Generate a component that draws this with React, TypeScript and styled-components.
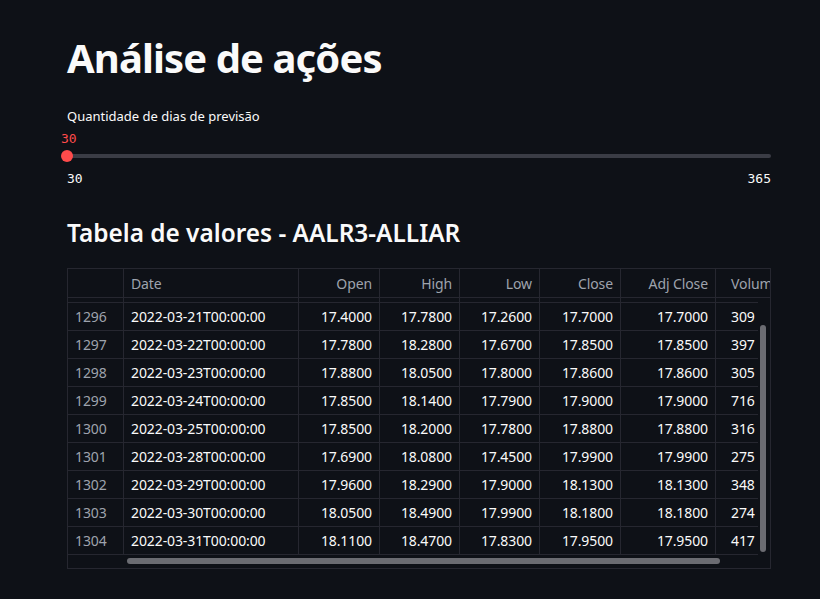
import React from 'react';
import styled, { createGlobalStyle } from 'styled-components';

const GlobalStyle = createGlobalStyle`
  html, body {
    margin: 0;
    padding: 0;
    background: #0e1117;
    color: #fafafa;
    font-family: "Noto Sans", "Open Sans", sans-serif;
  }
`;

type Row = [number, string, string, string, string, string, string, string];

const rows: Row[] = [
  [1296, '2022-03-21T00:00:00', '17.4000', '17.7800', '17.2600', '17.7000', '17.7000', '309'],
  [1297, '2022-03-22T00:00:00', '17.7800', '18.2800', '17.6700', '17.8500', '17.8500', '397'],
  [1298, '2022-03-23T00:00:00', '17.8800', '18.0500', '17.8000', '17.8600', '17.8600', '305'],
  [1299, '2022-03-24T00:00:00', '17.8500', '18.1400', '17.7900', '17.9000', '17.9000', '716'],
  [1300, '2022-03-25T00:00:00', '17.8500', '18.2000', '17.7800', '17.8800', '17.8800', '316'],
  [1301, '2022-03-28T00:00:00', '17.6900', '18.0800', '17.4500', '17.9900', '17.9900', '275'],
  [1302, '2022-03-29T00:00:00', '17.9600', '18.2900', '17.9000', '18.1300', '18.1300', '348'],
  [1303, '2022-03-30T00:00:00', '18.0500', '18.4900', '17.9900', '18.1800', '18.1800', '274'],
  [1304, '2022-03-31T00:00:00', '18.1100', '18.4700', '17.8300', '17.9500', '17.9500', '417'],
];

const headers = ['', 'Date', 'Open', 'High', 'Low', 'Close', 'Adj Close', 'Volume'];

export default function App() {
  return (
    <>
      <GlobalStyle />
      <Main>
        <Title>Análise de ações</Title>
        <SliderBlock>
          <Label>Quantidade de dias de previsão</Label>
          <ThumbValue>30</ThumbValue>
          <Track>
            <Thumb />
          </Track>
          <TickRow>
            <span>30</span>
            <span>365</span>
          </TickRow>
        </SliderBlock>
        <Subtitle>Tabela de valores - AALR3-ALLIAR</Subtitle>
        <Grid>
          <HeadRow>
            {headers.map((h, i) => (
              <Cell key={i} $col={i} $head>
                {h}
              </Cell>
            ))}
          </HeadRow>
          <Body>
            <SliverRow>
              {headers.map((_, i) => (
                <Cell key={i} $col={i} />
              ))}
            </SliverRow>
            {rows.map((r) => (
              <BodyRow key={r[0]}>
                {r.map((v, i) => (
                  <Cell key={i} $col={i}>
                    {v}
                  </Cell>
                ))}
              </BodyRow>
            ))}
          </Body>
          <HScroll />
          <VScroll />
        </Grid>
      </Main>
    </>
  );
}

const colWidths = [56, 175, 81, 80, 80, 81, 95, 72];

const Main = styled.main`
  padding: 26px 49px 30px 67px;
  width: 704px;
`;

const Title = styled.h1`
  margin: 0;
  font-size: 40px;
  font-weight: 700;
  line-height: 64px;
  letter-spacing: -0.9px;
  color: #fafafa;
`;

const SliderBlock = styled.div`
  margin-top: 16px;
`;

const Label = styled.div`
  font-size: 13px;
  line-height: 20px;
  color: #fafafa;
`;

const ThumbValue = styled.div`
  margin-top: 5px;
  font-family: "DejaVu Sans Mono", "Liberation Mono", monospace;
  font-size: 13px;
  line-height: 16px;
  color: #ff4b4b;
  width: 0;
  transform: translateX(-6px);
`;

const Track = styled.div`
  position: relative;
  margin-top: 7px;
  height: 4px;
  border-radius: 2px;
  background: #3a3c45;
`;

const Thumb = styled.div`
  position: absolute;
  left: -6px;
  top: -4px;
  width: 12px;
  height: 12px;
  border-radius: 50%;
  background: #ff4b4b;
`;

const TickRow = styled.div`
  display: flex;
  justify-content: space-between;
  margin-top: 13px;
  font-family: "DejaVu Sans Mono", "Liberation Mono", monospace;
  font-size: 13px;
  line-height: 16px;
  color: #fafafa;
`;

const Subtitle = styled.h3`
  margin: 28px 0 0;
  font-size: 24.4px;
  font-weight: 600;
  line-height: 36px;
  color: #fafafa;
`;

const Grid = styled.div`
  position: relative;
  margin-top: 17px;
  height: 299px;
  border: 1px solid #262730;
  overflow: hidden;
`;

const Body = styled.div`
  margin-right: 12px;
  overflow: hidden;
`;

const RowBase = styled.div`
  display: flex;
  width: max-content;
  border-bottom: 1px solid #262730;
`;

const HeadRow = styled(RowBase)`
  height: 28px;
`;

const SliverRow = styled(RowBase)`
  height: 4px;
`;

const BodyRow = styled(RowBase)`
  height: 27px;
`;

const Cell = styled.div<{ $col: number; $head?: boolean }>`
  box-sizing: border-box;
  flex: 0 0 ${(p) => colWidths[p.$col]}px;
  width: ${(p) => colWidths[p.$col]}px;
  padding: 0 7px;
  display: flex;
  align-items: center;
  justify-content: ${(p) => (p.$col < 2 ? 'flex-start' : 'flex-end')};
  font-size: 14px;
  white-space: nowrap;
  overflow: hidden;
  border-right: 1px solid #262730;
  color: ${(p) => (p.$head || p.$col === 0 ? '#9ea3ad' : '#fafafa')};
  letter-spacing: -0.1px;
  &:last-child {
    justify-content: flex-start;
    padding-left: 15px;
  }
`;

const HScroll = styled.div`
  position: absolute;
  left: 59px;
  width: 593px;
  bottom: 4px;
  height: 6px;
  border-radius: 3px;
  background: #6b6c72;
`;

const VScroll = styled.div`
  position: absolute;
  right: 4px;
  top: 56px;
  width: 6px;
  height: 227px;
  border-radius: 3px;
  background: #6b6c72;
`;
